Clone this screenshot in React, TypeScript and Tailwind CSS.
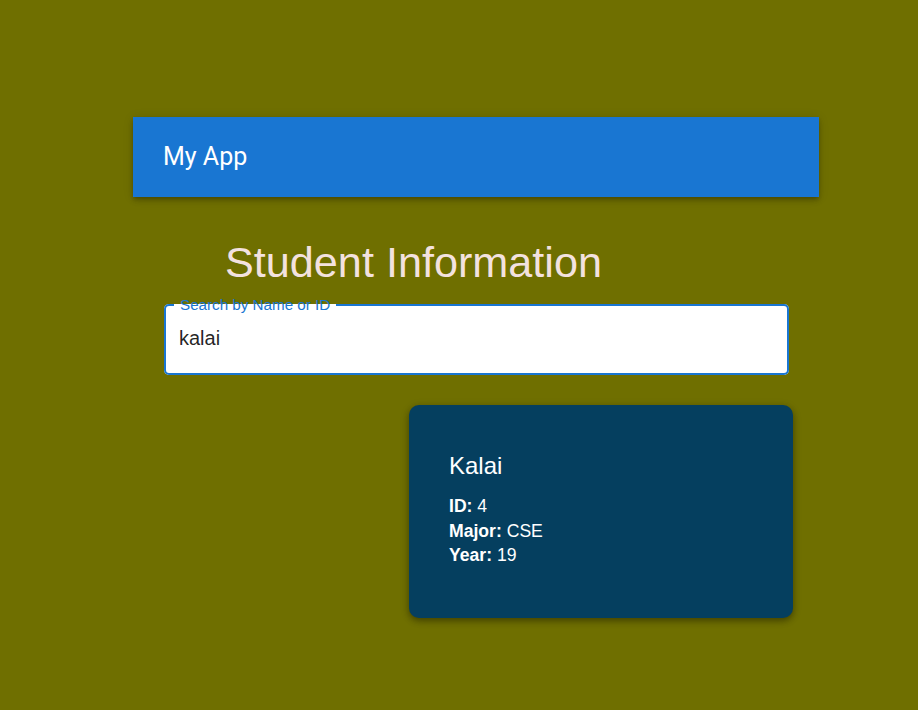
const student = { name: "Kalai", id: 4, major: "CSE", year: 19 };

function AppBar() {
  return (
    <header className="ml-[133px] w-[686px] h-[80px] bg-[#1976d2] flex items-center px-[30px] shadow-[0_2px_4px_-1px_rgba(0,0,0,0.2),0_4px_5px_0_rgba(0,0,0,0.14),0_1px_10px_0_rgba(0,0,0,0.12)]">
      <h1 className="font-['Roboto'] text-[25px] font-normal text-white">My App</h1>
    </header>
  );
}

function SearchField({ value }: { value: string }) {
  return (
    <fieldset className="ml-[164px] mt-[9px] w-[625px] border-2 border-[#1976d2] rounded-[5px] bg-white px-[8px] m-0 min-w-0">
      <legend className="px-[6px] text-[15.2px] leading-4 text-[#1976d2] font-['Liberation_Sans']">
        Search by Name or ID
      </legend>
      <input
        className="w-full bg-transparent outline-none px-[5px] pt-[13px] pb-[23px] text-[20px] leading-[24px] text-[rgba(0,0,0,0.87)] font-['Liberation_Sans']"
        defaultValue={value}
      />
    </fieldset>
  );
}

function StudentCard() {
  return (
    <div className="ml-[409px] mt-[30px] w-[384px] h-[213px] bg-[#053f5f] rounded-[10px] pl-10 pt-[43px] text-white font-['Liberation_Sans'] shadow-[0_3px_6px_rgba(0,0,0,0.3),0_2px_10px_rgba(0,0,0,0.15)]">
      <h3 className="text-[24px] leading-9 font-normal">{student.name}</h3>
      <div className="mt-[10px] text-[17.6px] leading-[24.5px]">
        <p>
          <span className="font-bold">ID:</span> {student.id}
        </p>
        <p>
          <span className="font-bold">Major:</span> {student.major}
        </p>
        <p>
          <span className="font-bold">Year:</span> {student.year}
        </p>
      </div>
    </div>
  );
}

export default function App() {
  return (
    <div className="min-h-screen bg-[#6f6f00] pt-[117px] pb-10">
      <AppBar />
      <h2 className="ml-[225px] mt-[39px] text-[43.2px] leading-[52px] text-[#f3e2df] font-['Liberation_Sans']">
        Student Information
      </h2>
      <SearchField value="kalai" />
      <StudentCard />
    </div>
  );
}
